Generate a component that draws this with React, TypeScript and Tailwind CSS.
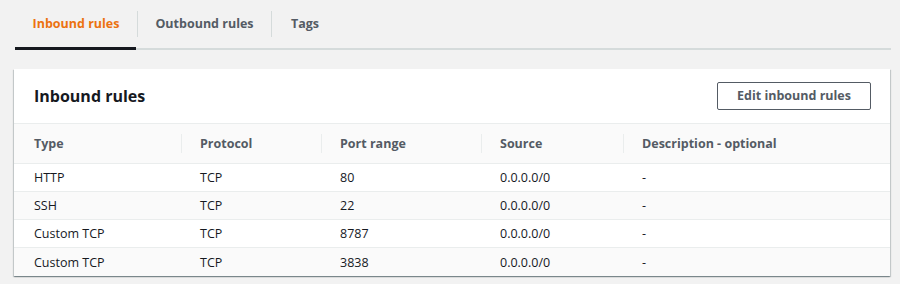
const rows = [
  { type: 'HTTP', protocol: 'TCP', port: '80', source: '0.0.0.0/0', desc: '-' },
  { type: 'SSH', protocol: 'TCP', port: '22', source: '0.0.0.0/0', desc: '-' },
  { type: 'Custom TCP', protocol: 'TCP', port: '8787', source: '0.0.0.0/0', desc: '-' },
  { type: 'Custom TCP', protocol: 'TCP', port: '3838', source: '0.0.0.0/0', desc: '-' },
];

const headers = ['Type', 'Protocol', 'Port range', 'Source', 'Description - optional'];

const cols = 'grid grid-cols-[167px_140px_160px_142px_1fr]';

export default function App() {
  return (
    <div className="h-[284px] w-[900px] bg-[#f2f2f2] font-['Open_Sans',sans-serif] text-[#16191f]">
      <div className="px-[15px]">
        <div className="flex w-[876px] items-center border-b-2 border-[#d5dbdb]">
          <div className="relative flex h-[48px] w-[122px] items-center justify-center">
            <span className="text-[12.5px] font-bold text-[#ec7211]">Inbound rules</span>
            <div className="absolute -bottom-[2px] left-0 h-[3px] w-[121px] bg-[#16191f]" />
          </div>
          <div className="h-[26px] w-px bg-[#d5dbdb]" />
          <div className="flex h-[48px] w-[133px] items-center justify-center">
            <span className="text-[12.5px] font-bold text-[#545b64]">Outbound rules</span>
          </div>
          <div className="h-[26px] w-px bg-[#d5dbdb]" />
          <div className="flex h-[48px] items-center pl-[19px]">
            <span className="text-[12.5px] font-bold text-[#545b64]">Tags</span>
          </div>
        </div>
      </div>

      <div className="ml-[14px] mt-[19px] w-[876px] bg-white shadow-[0_1px_1px_0_rgba(0,28,36,0.3),1px_1px_1px_0_rgba(0,28,36,0.15),-1px_1px_1px_0_rgba(0,28,36,0.15)]">
        <div className="flex h-[55px] items-center justify-between border-b border-[#eaeded] pl-[20px] pr-[19px]">
          <h2 className="text-[16px] font-bold">Inbound rules</h2>
          <button className="h-[28px] w-[154px] rounded-[2px] border border-[#545b64] bg-white text-[12.5px] font-bold text-[#545b64]">
            Edit inbound rules
          </button>
        </div>

        <div className={`${cols} h-[40px] items-center border-b border-[#eaeded] bg-[#fafafa]`}>
          {headers.map((h, i) => (
            <div
              key={h}
              className={`flex h-[19px] items-center pt-[2px] text-[12.5px] font-bold text-[#545b64] ${i === 0 ? 'pl-[20px]' : 'border-l border-[#eaeded] pl-[18px]'}`}
            >
              {h}
            </div>
          ))}
        </div>

        {rows.map((r, idx) => (
          <div
            key={idx}
            className={`${cols} h-[28px] items-center pt-[2px] text-[12.5px] ${idx < rows.length - 1 ? 'border-b border-[#eaeded]' : ''} ${idx % 2 === 1 ? 'bg-[#fafafa]' : 'bg-white'}`}
          >
            <div className="pl-[20px]">{r.type}</div>
            <div className="pl-[19px]">{r.protocol}</div>
            <div className="pl-[19px]">{r.port}</div>
            <div className="pl-[19px]">{r.source}</div>
            <div className="pl-[19px]">{r.desc}</div>
          </div>
        ))}
      </div>
    </div>
  );
}
